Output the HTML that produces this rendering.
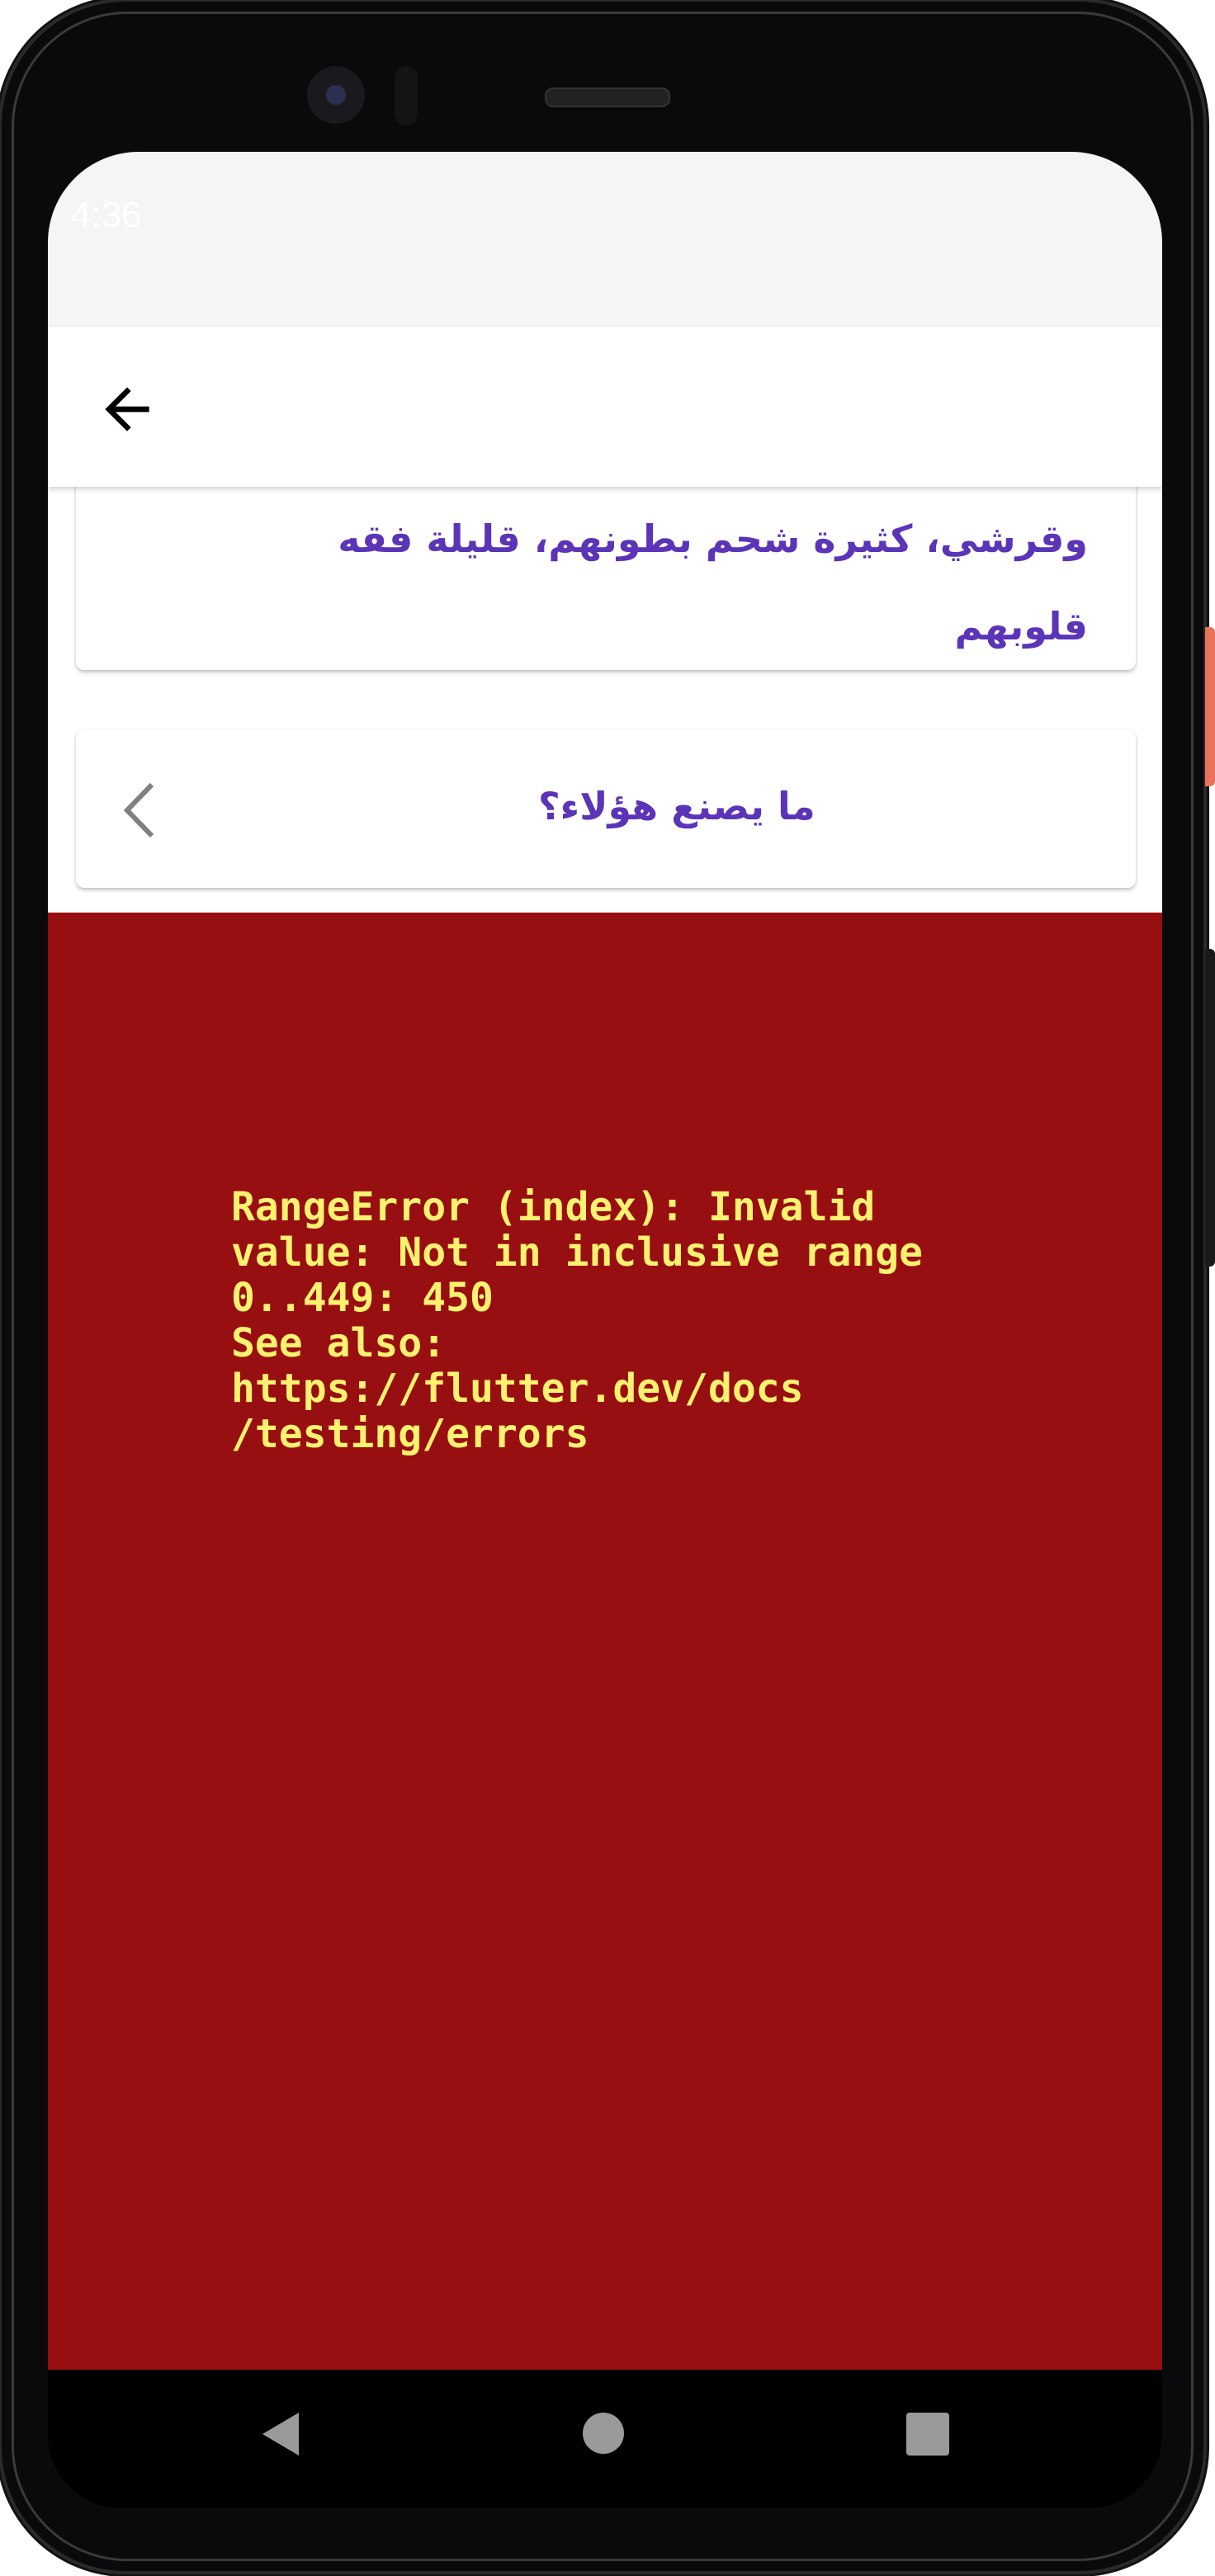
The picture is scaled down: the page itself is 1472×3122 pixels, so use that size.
<!DOCTYPE html>
<html><head><meta charset="utf-8">
<style>
html,body{margin:0;padding:0;background:#fff;}
body{width:1472px;height:3122px;position:relative;overflow:hidden;font-family:"Liberation Sans","DejaVu Sans",sans-serif;}
.abs{position:absolute;}
.body{left:2px;top:2px;width:1456px;height:3114px;background:#0a0a0c;border-radius:150px;box-shadow:0 0 0 4px #2a2a2c,0 0 0 7px #111;}
.rim{left:14px;top:14px;width:1432px;height:3090px;border-radius:140px;border:3px solid #3a3a3c;box-sizing:border-box;}
.screen{left:58px;top:184px;width:1350px;height:2856px;border-radius:110px 110px 90px 90px;overflow:hidden;background:#000;}
.status{left:0;top:0;width:1350px;height:212px;background:#f5f5f5;}
.appbar{left:0;top:212px;width:1350px;height:194px;background:#fff;box-shadow:0 3px 6px rgba(0,0,0,.18);z-index:3;}
.content{left:0;top:406px;width:1350px;height:518px;background:#fff;}
.card{background:#fff;border-radius:10px;box-shadow:0 3px 5px rgba(0,0,0,.22),0 0 2px rgba(0,0,0,.08);}
.ar{font-family:"DejaVu Sans",sans-serif;font-weight:bold;color:#5b34b8;direction:rtl;font-size:46px;white-space:nowrap;}
.red{left:0;top:922px;width:1350px;height:1766px;background:#970f11;}
.err{left:222px;top:330px;font-family:"DejaVu Sans Mono","Liberation Mono",monospace;font-weight:bold;font-size:48px;line-height:55px;color:#fff170;white-space:pre;}
.nav{left:0;top:2688px;width:1350px;height:168px;background:#000;}
</style></head><body>
<div class="abs body"></div>
<div class="abs rim"></div>
<div class="abs" style="left:1460px;top:760px;width:12px;height:193px;background:#e8735a;border-radius:0 6px 6px 0;"></div>
<div class="abs" style="left:1460px;top:1150px;width:12px;height:385px;background:#1a1a1c;border-radius:0 6px 6px 0;"></div>
<div class="abs" style="left:372px;top:80px;width:70px;height:70px;border-radius:50%;background:#1a1a1e;"></div>
<div class="abs" style="left:395px;top:103px;width:24px;height:24px;border-radius:50%;background:#2a3050;"></div>
<div class="abs" style="left:478px;top:80px;width:28px;height:72px;border-radius:14px;background:#141416;"></div>
<div class="abs" style="left:660px;top:106px;width:148px;height:20px;border-radius:10px;background:#222;border:2px solid #333;"></div>

<div class="abs screen">
  <div class="abs status">
    <div class="abs" style="left:28px;top:52px;font-size:44px;color:#fff;">4:36</div>
  </div>
  <div class="abs appbar">
    <svg class="abs" style="left:56px;top:60px" width="80" height="80" viewBox="0 0 24 24"><path d="M20 11H7.83l5.59-5.59L12 4l-8 8 8 8 1.41-1.41L7.83 13H20v-2z" fill="#000"/></svg>
  </div>
  <div class="abs content">
    <div class="abs card" style="left:34px;top:-30px;width:1284px;height:252px;">
      <div class="abs ar" style="right:58px;top:40px;line-height:106px;width:1000px;text-align:right;">وقرشي، كثيرة شحم بطونهم، قليلة فقه<br>قلوبهم</div>
    </div>
    <div class="abs card" style="left:34px;top:294px;width:1284px;height:192px;">
      <svg class="abs" style="left:52px;top:64px" width="50" height="68" viewBox="0 0 50 68"><path d="M40 3 L10 34 L40 65" stroke="#808080" stroke-width="6" fill="none"/></svg>
      <div class="abs ar" style="left:560px;top:66px;">ما يصنع هؤلاء؟</div>
    </div>
  </div>
  <div class="abs red">
    <div class="abs err">RangeError (index): Invalid
value: Not in inclusive range
0..449: 450
See also:
https://flutter.dev/docs
/testing/errors</div>
  </div>
  <div class="abs nav">
    <svg class="abs" style="left:252px;top:48px" width="60" height="60" viewBox="0 0 60 60"><path d="M52 4 L52 56 L8 30 Z" fill="#9a9a9a"/></svg>
    <div class="abs" style="left:648px;top:52px;width:50px;height:50px;border-radius:50%;background:#9a9a9a;"></div>
    <div class="abs" style="left:1040px;top:52px;width:52px;height:52px;border-radius:4px;background:#9a9a9a;"></div>
  </div>
</div>
</body></html>
